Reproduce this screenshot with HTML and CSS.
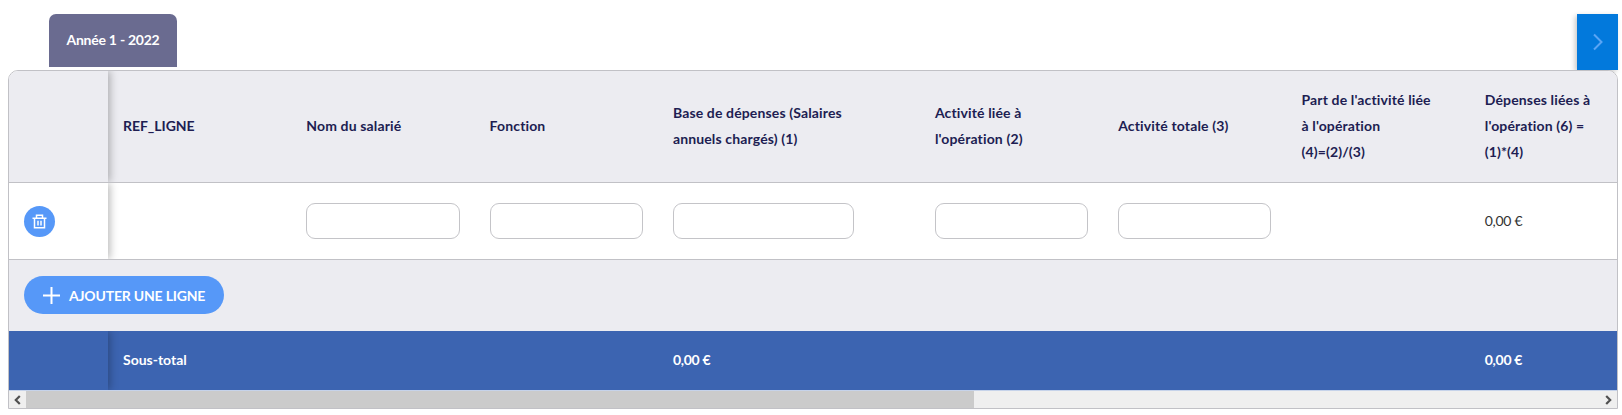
FILE: index.html
```
<!DOCTYPE html>
<html lang="fr">
<head>
    <meta charset="utf-8">
    <meta name="viewport" content="width=device-width, initial-scale=1.0">
    <title>Dépenses de personnel</title>
    <link rel="stylesheet" href="styles.css">
</head>
<body>

    <div class="tabs">
        <button type="button" class="tab">Année 1 - 2022</button>
        <button type="button" class="next" aria-label="Suivant">
            <svg width="10" height="18" viewBox="0 0 10 18"><path d="M1 1.5 8.5 9 1 16.5" /></svg>
        </button>
    </div>

    <div class="expenses">

        <div class="row head">
            <div class="cell sticky"></div>
            <div class="cell"><span class="ref">REF_LIGNE</span></div>
            <div class="cell">Nom du salarié</div>
            <div class="cell">Fonction</div>
            <div class="cell">Base de dépenses (Salaires<br>annuels chargés) (1)</div>
            <div class="cell">Activité liée à<br>l'opération (2)</div>
            <div class="cell">Activité totale (3)</div>
            <div class="cell">Part de l'activité liée<br>à l'opération<br>(4)=(2)/(3)</div>
            <div class="cell">Dépenses liées à<br>l'opération (6) =<br>(1)*(4)</div>
        </div>

        <div class="row line">
            <div class="cell sticky">
                <button type="button" class="delete" aria-label="Supprimer">
                    <svg width="15" height="15" viewBox="0 0 15 15">
                        <path d="M.5 4.2h14M4.5 4V1.2h6V4M2.5 4.5v9.3h10V4.5M6 6.8v4.6M9 6.8v4.6" />
                    </svg>
                </button>
            </div>
            <div class="cell"></div>
            <div class="cell"><input type="text" class="field"></div>
            <div class="cell"><input type="text" class="field"></div>
            <div class="cell"><input type="text" class="field large"></div>
            <div class="cell"><input type="text" class="field"></div>
            <div class="cell"><input type="text" class="field"></div>
            <div class="cell"></div>
            <div class="cell"><span class="amount">0,00 €</span></div>
        </div>

        <div class="actions">
            <button type="button" class="add">
                <svg width="17" height="17" viewBox="0 0 17 17"><path d="M8.5 0v17M0 8.5h17" /></svg>
                <span>AJOUTER UNE LIGNE</span>
            </button>
        </div>

        <div class="row total">
            <div class="cell sticky"></div>
            <div class="cell">Sous-total</div>
            <div class="cell"></div>
            <div class="cell"></div>
            <div class="cell"><span class="amount">0,00 €</span></div>
            <div class="cell"></div>
            <div class="cell"></div>
            <div class="cell"></div>
            <div class="cell"><span class="amount">0,00 €</span></div>
        </div>

        <div class="scrollbar">
            <div class="arrow">
                <svg width="7" height="10" viewBox="0 0 7 10"><path d="M5.8 1 1.8 5l4 4" /></svg>
            </div>
            <div class="thumb"></div>
            <div class="arrow last">
                <svg width="7" height="10" viewBox="0 0 7 10"><path d="M1.2 1l4 4-4 4" /></svg>
            </div>
        </div>

    </div>

</body>
</html>
```
FILE: styles.css
```
:root {
    --border: #c1c1c6;
    --light: #ececf1;
    --blue: #5698f8;
    --navy: #201d52;
}

* {
    box-sizing: border-box;
}

body {
    margin: 0;
    padding: 14px 4px 0 8px;
    background-color: #fff;
    color: var(--navy);
    font-family: Lato, "Liberation Sans", sans-serif;
    font-size: 14px;
    overflow: hidden;
}

button {
    padding: 0;
    border: 0;
    color: #fff;
    font: inherit;
    font-weight: 700;
}

svg {
    display: block;
    fill: none;
    stroke: #fff;
}

.tabs {
    height: 56px;
    padding-left: 41px;
    display: flex;
    justify-content: space-between;
}

.tab {
    width: 128px;
    height: 53px;
    padding-bottom: 2px;
    border-radius: 7px 7px 0 0;
    background-color: #6a6b90;
    letter-spacing: -0.25px;
}

.next {
    width: 41px;
    height: 56px;
    background-color: #0279dc;
    box-shadow: -2px 2px 5px rgba(0, 0, 0, 0.22);
    display: flex;
    align-items: center;
    justify-content: center;
}
.next svg {
    stroke: #5ba5f5;
    stroke-width: 2;
}

.expenses {
    position: relative;
    border: solid 1px var(--border);
    border-radius: 10px 10px 0 0;
    background-color: #fff;
    overflow: hidden;
}

.row {
    display: grid;
    grid-template-columns: 99px repeat(3, 183.3px) 262px repeat(4, 183.3px);
    overflow: hidden;
}

.cell {
    padding: 0 15px;
    display: flex;
    align-items: center;
    white-space: nowrap;
}
.cell.sticky {
    box-shadow: 2px 0 8px rgba(0, 0, 0, 0.28);
}

.head {
    height: 112px;
    border-bottom: solid 1px var(--border);
    background-color: var(--light);
    font-weight: 700;
    line-height: 26px;
    letter-spacing: 0.14px;
}
.head .cell {
    padding-bottom: 2px;
}
.head .ref {
    letter-spacing: -0.05px;
}

.line {
    height: 77px;
    border-bottom: solid 1px var(--border);
    color: #333;
}

.amount {
    padding-bottom: 2px;
    letter-spacing: -0.3px;
}

.delete {
    width: 31px;
    height: 31px;
    border-radius: 50%;
    background-color: var(--blue);
    display: flex;
    align-items: center;
    justify-content: center;
}
.delete svg {
    stroke-width: 1.5;
}

.field {
    width: 100%;
    height: 36px;
    border: solid 1px #c4c4c8;
    border-radius: 9px;
}
.field.large {
    width: 181px;
}

.actions {
    height: 71px;
    padding: 0 0 1px 15px;
    background-color: var(--light);
    display: flex;
    align-items: center;
}

.add {
    width: 200px;
    height: 38px;
    padding-left: 19px;
    border-radius: 19px;
    background-color: var(--blue);
    display: flex;
    align-items: center;
    gap: 9px;
    letter-spacing: -0.19px;
}
.add svg {
    stroke-width: 2;
}

.total {
    height: 59px;
    background-color: #3c64b1;
    color: #fff;
    font-weight: 700;
}
.total .cell {
    padding-bottom: 2px;
}
.total .amount {
    padding-bottom: 0;
}

.scrollbar {
    height: 18px;
    border-top: solid 1px #c6d3ea;
    background-color: #efefef;
    display: flex;
}
.scrollbar .thumb {
    width: 948px;
    background-color: #cbcbcb;
}

.arrow {
    width: 17px;
    display: flex;
    align-items: center;
    justify-content: center;
}
.arrow.last {
    margin-left: auto;
}
.arrow svg {
    stroke: #505050;
    stroke-width: 2.2;
}
```
